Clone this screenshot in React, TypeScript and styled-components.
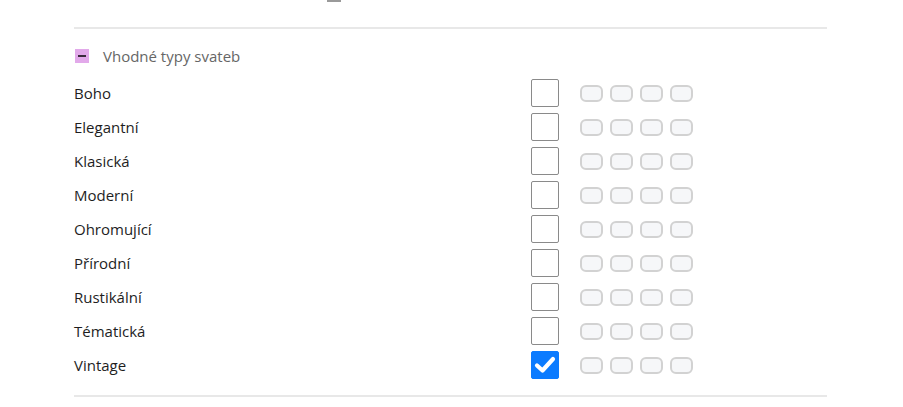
import React, { useState } from 'react'
import styled, { createGlobalStyle } from 'styled-components'

const GlobalStyle = createGlobalStyle`
  body {
    margin: 0;
    background: #fff;
    font-family: 'Open Sans', 'Noto Sans', sans-serif;
  }
`

const Page = styled.div`
  width: 753px;
  padding-left: 74px;
`

const TopStub = styled.div`
  height: 27px;
  display: flex;
  align-items: flex-start;
  padding-left: 253px;

  &::before {
    content: '';
    display: block;
    width: 14px;
    height: 2px;
    background: #9a9a9a;
  }
`

const Divider = styled.div`
  height: 2px;
  background: #e8e8e8;
`

const Section = styled.section`
  padding: 19px 0 13px;
`

const Header = styled.div`
  display: flex;
  align-items: center;
  gap: 14px;
  height: 16px;
  margin-bottom: 12px;
  font-size: 15px;
  color: #666;
`

const Toggle = styled.span`
  width: 14px;
  height: 14px;
  margin-left: 1px;
  background: #e2a9ea;
  display: flex;
  align-items: center;
  justify-content: center;

  &::before {
    content: '';
    width: 8px;
    height: 2px;
    background: #3a2a3c;
  }
`

const Row = styled.div`
  display: flex;
  align-items: center;
  height: 34px;
`

const Label = styled.span`
  width: 457px;
  font-size: 15px;
  color: #1e1e1e;
`

const Box = styled.button<{ $checked: boolean }>`
  width: 28px;
  height: 28px;
  padding: 0;
  margin: 0 21px 0 0;
  border-radius: 2px;
  border: ${({ $checked }) => ($checked ? '1px solid #0b7bff' : '1.5px solid #8a8a8a')};
  background: ${({ $checked }) => ($checked ? '#0b7bff' : '#fff')};
  display: flex;
  align-items: center;
  justify-content: center;
  cursor: pointer;
`

const Pills = styled.div`
  display: flex;
  gap: 7px;
`

const Pill = styled.span`
  width: 23px;
  height: 17px;
  box-sizing: border-box;
  border: 2px solid #d2d2d2;
  border-radius: 6px;
  background: #f6f7f9;
`

const types = ['Boho', 'Elegantní', 'Klasická', 'Moderní', 'Ohromující', 'Přírodní', 'Rustikální', 'Tématická', 'Vintage']

export default function App() {
  const [checked, setChecked] = useState<string[]>(['Vintage'])

  const toggle = (t: string) =>
    setChecked(c => (c.includes(t) ? c.filter(x => x !== t) : [...c, t]))

  return (
    <>
      <GlobalStyle />
      <Page>
        <TopStub />
        <Divider />
        <Section>
          <Header>
            <Toggle />
            Vhodné typy svateb
          </Header>
          {types.map(t => (
            <Row key={t}>
              <Label>{t}</Label>
              <Box $checked={checked.includes(t)} onClick={() => toggle(t)}>
                {checked.includes(t) && (
                  <svg width="22" height="18" viewBox="0 0 22 18">
                    <path d="M3 9.5 L8.5 14.5 L19 3" fill="none" stroke="#fff" strokeWidth="4.2" strokeLinecap="round" strokeLinejoin="round" />
                  </svg>
                )}
              </Box>
              <Pills>
                <Pill />
                <Pill />
                <Pill />
                <Pill />
              </Pills>
            </Row>
          ))}
        </Section>
        <Divider />
      </Page>
    </>
  )
}
